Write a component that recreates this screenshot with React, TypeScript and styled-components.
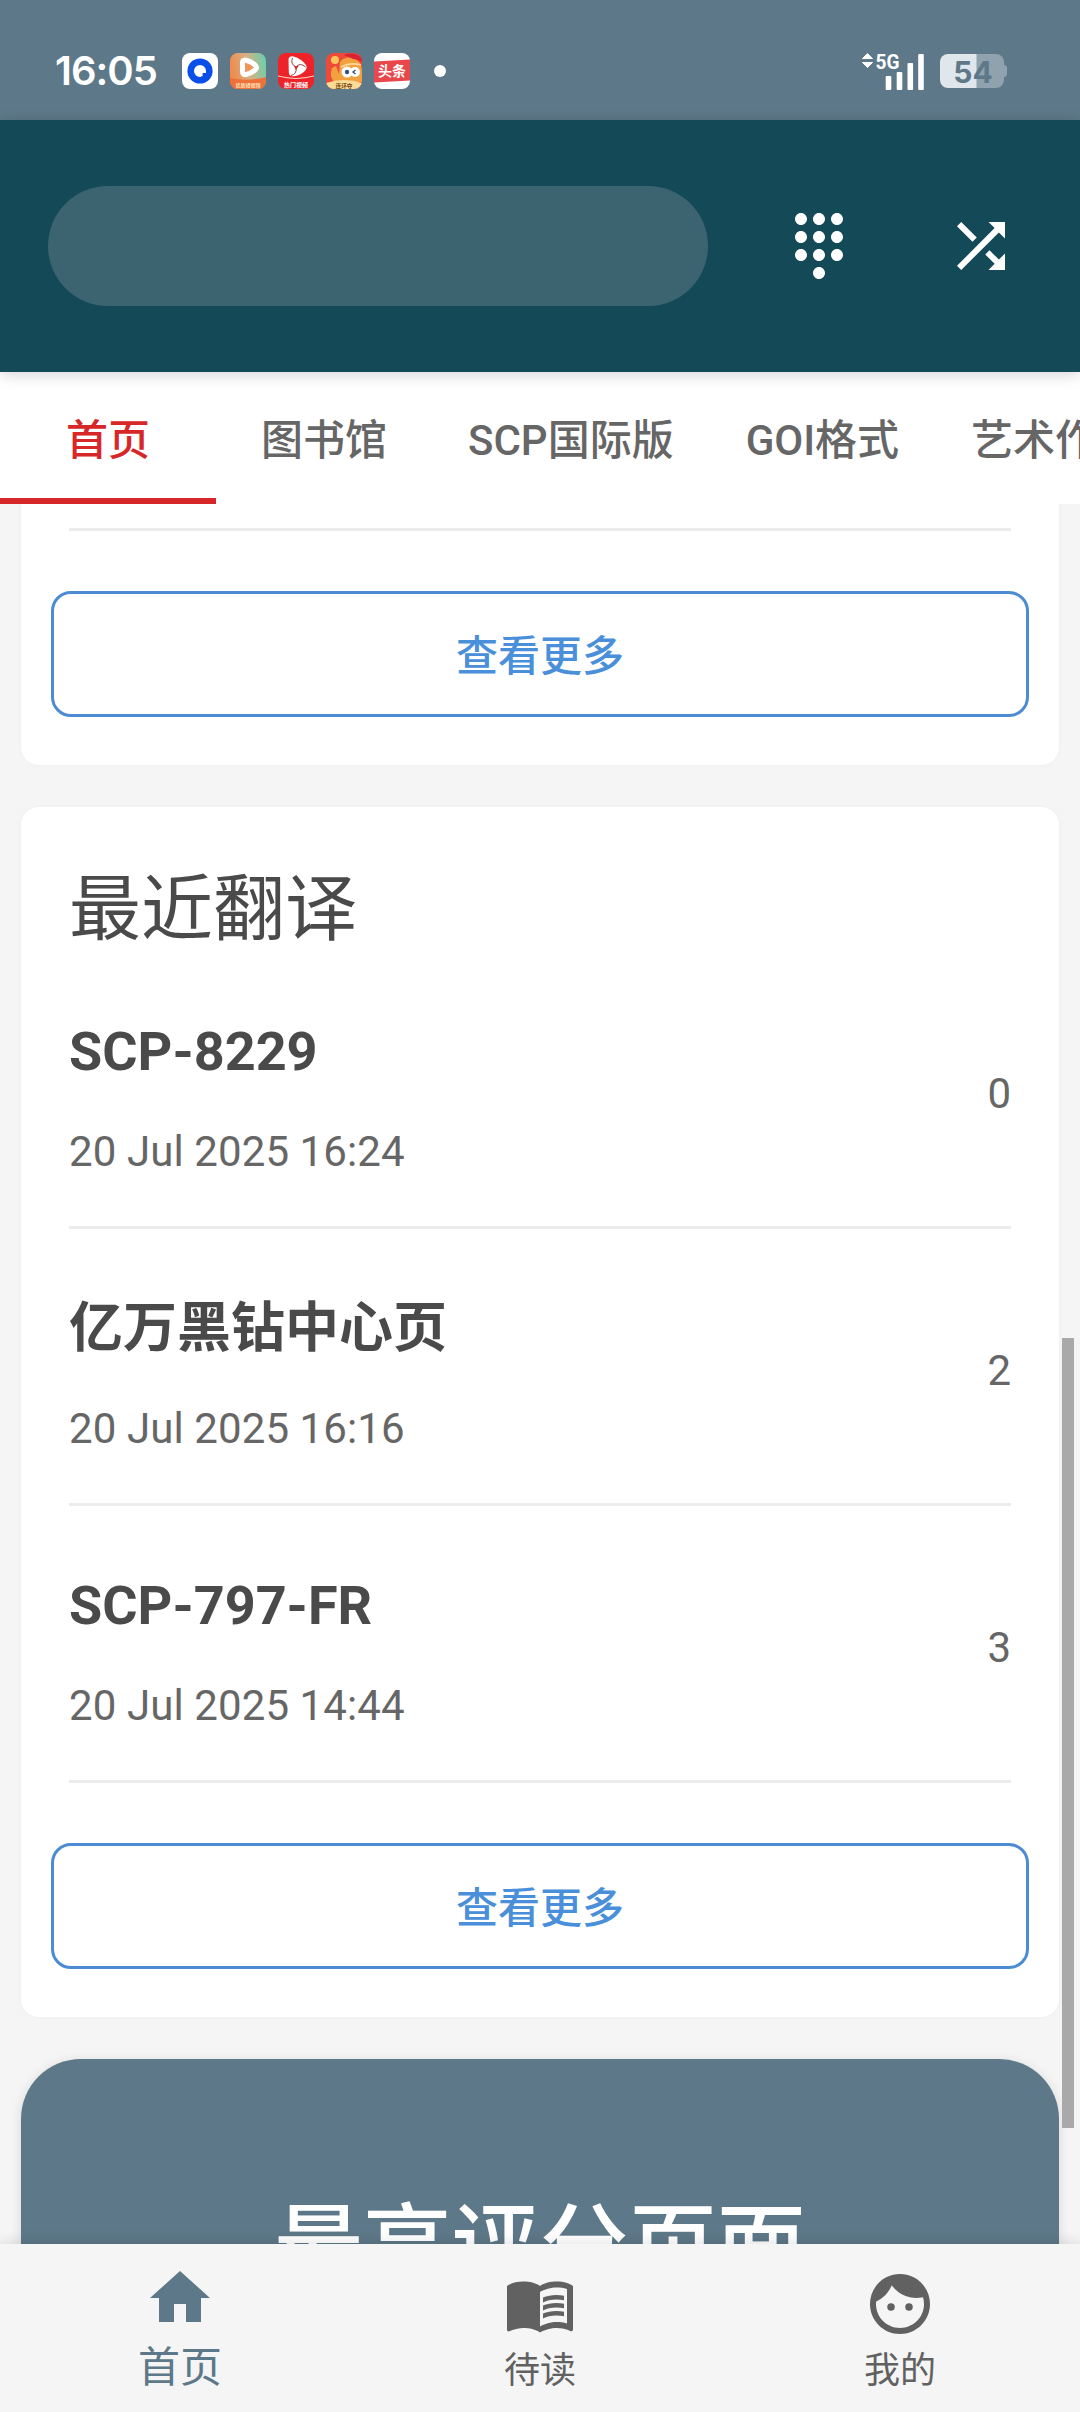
import React from "react";
import styled, { createGlobalStyle } from "styled-components";
import { MdDialpad, MdShuffle, MdHome, MdMenuBook, MdFace } from "react-icons/md";

const GlobalStyle = createGlobalStyle`
  * { box-sizing: border-box; }
  html, body { margin: 0; padding: 0; }
  body {
    font-family: Roboto, "Noto Sans CJK SC", sans-serif;
    background: #f5f5f5;
    overflow: hidden;
  }
  button { font: inherit; border: 0; background: none; padding: 0; margin: 0; }
  h2, h3, p { margin: 0; font-weight: 400; }
`;

const Screen = styled.div`
  position: relative;
  display: flex;
  flex-direction: column;
  width: 1080px;
  height: 2412px;
  overflow: hidden;
  background: #f5f5f5;
`;

const StatusBar = styled.div`
  flex: none;
  display: flex;
  align-items: flex-start;
  justify-content: space-between;
  height: 120px;
  padding: 51px 73px 0 55px;
  background: #5d7888;
`;

const StatusGroup = styled.div<{ $gap: number }>`
  display: flex;
  align-items: center;
  gap: ${(p) => p.$gap}px;
  height: 40px;
`;

const Clock = styled.span`
  width: 115px;
  font-family: Inter, sans-serif;
  font-size: 40px;
  font-weight: 600;
  line-height: 40px;
  letter-spacing: -1px;
  color: #fff;
`;

const AppBadge = styled.svg`
  width: 36px;
  height: 36px;
  display: block;
`;

const MoreDot = styled.span`
  width: 12px;
  height: 12px;
  margin-left: 12px;
  border-radius: 50%;
  background: #fff;
`;

const Signal = styled.svg`
  width: 64px;
  height: 38px;
  display: block;
  overflow: visible;
`;

const Battery = styled.svg`
  width: 67px;
  height: 35px;
  display: block;
  overflow: visible;
`;

const Header = styled.header`
  position: relative;
  z-index: 3;
  flex: none;
  display: flex;
  align-items: center;
  height: 252px;
  padding: 0 18px 0 48px;
  background: #144957;
  box-shadow: 0 3px 14px rgba(0, 0, 0, 0.16);
`;

const SearchField = styled.div`
  flex: none;
  width: 660px;
  height: 120px;
  margin-right: 30px;
  border-radius: 60px;
  background: #3c6370;
`;

const HeaderButton = styled.button`
  flex: none;
  display: flex;
  align-items: center;
  justify-content: center;
  width: 162px;
  height: 162px;
  color: #fff;
  svg { width: 72px; height: 72px; }
`;

const Tabs = styled.nav`
  position: relative;
  z-index: 2;
  flex: none;
  display: flex;
  height: 132px;
  background: #fff;
  overflow: hidden;
`;

const Tab = styled.button<{ $active?: boolean }>`
  flex: none;
  min-width: 216px;
  height: 132px;
  padding: 12px 36px 0;
  border-bottom: 6px solid ${(p) => (p.$active ? "#d82728" : "transparent")};
  font-size: 42px;
  font-weight: 500;
  line-height: 60px;
  white-space: nowrap;
  color: ${(p) => (p.$active ? "#d82728" : "#666")};
`;

const Content = styled.main`
  flex: 1;
  min-height: 0;
  display: flex;
  flex-direction: column;
  gap: 42px;
  padding: 0 21px;
  overflow: hidden;
`;

const Card = styled.section<{ $cut?: boolean }>`
  flex: none;
  padding: 0 30px 48px;
  border-radius: ${(p) => (p.$cut ? "0 0 18px 18px" : "18px")};
  background: #fff;
  box-shadow: 0 0 5px rgba(0, 0, 0, 0.03);
`;

const RowEnd = styled.div`
  height: 27px;
  margin: 0 18px;
  border-bottom: 3px solid #ececec;
`;

const CardTitle = styled.h2`
  height: 145px;
  padding: 51px 18px 0;
  font-size: 72px;
  line-height: 104px;
  color: #4a4a4a;
`;

const Row = styled.article`
  display: flex;
  align-items: center;
  justify-content: space-between;
  height: 277px;
  margin: 0 18px;
  border-bottom: 3px solid #ececec;
`;

const RowText = styled.div`
  display: flex;
  flex-direction: column;
  gap: 30px;
  padding-top: 15px;
`;

const RowTitle = styled.h3`
  font-size: 54px;
  font-weight: 700;
  line-height: 80px;
  color: #4a4a4a;
`;

const RowDate = styled.p`
  font-size: 42px;
  line-height: 60px;
  letter-spacing: 0.1px;
  color: #666;
`;

const RowScore = styled.span`
  padding-top: 9px;
  font-size: 42px;
  line-height: 60px;
  color: #666;
`;

const MoreButton = styled.button`
  display: block;
  width: 100%;
  height: 126px;
  margin-top: 60px;
  padding-top: 6px;
  border: 3px solid #4d8cd2;
  border-radius: 20px;
  font-size: 42px;
  font-weight: 500;
  line-height: 60px;
  color: #4a8fd9;
`;

const Hero = styled.section`
  flex: none;
  height: 420px;
  padding-top: 123px;
  border-radius: 60px;
  background: #5d7888;
  box-shadow: 0 2px 12px rgba(0, 0, 0, 0.12);
  font-size: 88.5px;
  font-weight: 500;
  line-height: 130px;
  text-align: center;
  color: #fff;
`;

const Scrollbar = styled.div`
  position: absolute;
  z-index: 1;
  left: 1062px;
  top: 1338px;
  width: 12px;
  height: 790px;
  background: #a9a9a9;
`;

const BottomNav = styled.nav`
  position: relative;
  z-index: 3;
  flex: none;
  display: flex;
  height: 168px;
  background: #f5f5f5;
  box-shadow: 0 0 14px rgba(0, 0, 0, 0.14);
`;

const NavItem = styled.button<{ $active?: boolean }>`
  flex: 1;
  display: flex;
  flex-direction: column;
  align-items: center;
  gap: ${(p) => (p.$active ? 4 : 1)}px;
  padding-top: ${(p) => (p.$active ? 18 : 24)}px;
  font-size: ${(p) => (p.$active ? 42 : 36)}px;
  line-height: 60px;
  color: ${(p) => (p.$active ? "#5d7888" : "#616161")};
  svg { flex: none; width: 72px; height: 72px; }
`;

const rows = [
  { title: "SCP-8229", date: "20 Jul 2025 16:24", score: 0 },
  { title: "亿万黑钻中心页", date: "20 Jul 2025 16:16", score: 2 },
  { title: "SCP-797-FR", date: "20 Jul 2025 14:44", score: 3 },
];

const tabs = ["首页", "图书馆", "SCP国际版", "GOI格式", "艺术作品"];

function BrowserBadge() {
  return (
    <AppBadge viewBox="0 0 36 36">
      <rect width="36" height="36" rx="8" fill="#fff" />
      <circle cx="18" cy="18" r="12.6" fill="#0a4fe8" />
      <path d="M18 12a6 6 0 0 1 6 6v2h-3.400v3.200H19V24h-1a6 6 0 0 1 0-12z" fill="#fff" />
    </AppBadge>
  );
}

function VideoBadge() {
  return (
    <AppBadge viewBox="0 0 36 36">
      <defs>
        <linearGradient id="video" x1="0" y1=".4" x2="1" y2=".2">
          <stop offset="0" stopColor="#f08a4c" />
          <stop offset=".5" stopColor="#d6b183" />
          <stop offset="1" stopColor="#69cfae" />
        </linearGradient>
        <clipPath id="videoClip"><rect width="36" height="36" rx="8" /></clipPath>
      </defs>
      <g clipPath="url(#videoClip)">
        <rect width="36" height="36" fill="url(#video)" />
        <path d="M0 25q18 4 36-1v12H0z" fill="#f0703a" />
        <path d="M12.500 9q.5-2.500 3.500-1.800 6 1.300 9.500 5.300 2 2.500-.5 4.500-4 3.500-9 4.500-3.500.5-3.500-3z" fill="#f0945a" stroke="#fff" strokeWidth="5" strokeLinejoin="round" />
        <text x="18" y="33.500" fontSize="5" fontWeight="700" textAnchor="middle" fill="#ffe2b8">优质短视频</text>
      </g>
    </AppBadge>
  );
}

function HotVideoBadge() {
  return (
    <AppBadge viewBox="0 0 36 36">
      <rect width="36" height="36" rx="8" fill="#ee2229" />
      <path d="M10.500 6q1-3.500 5-2.600 8 2 12.500 8.600 2 4-2.500 7.200-5 3.800-11 4-3.500 0-3.700-4z" fill="#fff" />
      <path d="M18 14q-6-3-3.500-9M18 14q4-5 9.500 0M18 15q1 6-5 7.500" stroke="#8e2a30" strokeWidth=".9" fill="none" />
      <path d="M16 13h4.500L18 17z" fill="#e0252c" />
      <path d="M0 23q18 5 36 0" stroke="#ffd8c8" strokeWidth="1.200" fill="none" />
      <text x="18" y="34" fontSize="6" fontWeight="700" textAnchor="middle" fill="#fff">热门视频</text>
    </AppBadge>
  );
}

function CartoonBadge() {
  return (
    <AppBadge viewBox="0 0 36 36">
      <defs><clipPath id="toonClip"><rect width="36" height="36" rx="8" /></clipPath></defs>
      <g clipPath="url(#toonClip)">
        <rect width="36" height="36" fill="#ee4a3a" />
        <path d="M14 9q4-6 14-4 7 3 8 12v12H8q-5-6-2-14l4-2 3 8z" fill="#f2a13f" />
        <path d="M18 2q9-4 18 3v4q-6-3-9-3-4-2-9-4z" fill="#d92232" />
        <path d="M15 14q9-5 20-2" stroke="#fbd9a0" strokeWidth="1.500" fill="none" />
        <circle cx="9" cy="7" r="4" fill="#fbc65b" />
        <circle cx="21" cy="19" r="5.500" fill="#fff" />
        <circle cx="29" cy="19" r="5" fill="#fff" />
        <circle cx="21" cy="19" r="2.200" fill="#39507a" />
        <path d="M29.500 17l-2.500 2 2.500 2" stroke="#39507a" strokeWidth="1.400" fill="none" />
        <path d="M0 30q18-6 36 0v6H0z" fill="#fbdc97" />
        <text x="18" y="34.500" fontSize="5.600" fontWeight="700" textAnchor="middle" fill="#7a4a10">连环夺</text>
      </g>
    </AppBadge>
  );
}

function NewsBadge() {
  return (
    <AppBadge viewBox="0 0 36 36">
      <rect width="36" height="36" rx="8" fill="#fff" />
      <path d="M0 8.500L36 6.500v21L0 29.500z" fill="#e9474b" />
      <text x="18" y="23.300" fontSize="14" fontWeight="700" textAnchor="middle" fill="#fff">头条</text>
    </AppBadge>
  );
}

function SignalIcon() {
  return (
    <Signal viewBox="0 0 64 38">
      <path d="M2.500 6.500L7.500 1.500l5 5zM2.500 10.500h10l-5 5z" fill="#fff" stroke="#fff" strokeWidth="1" strokeLinejoin="round" />
      <text x="15.500" y="16.500" fontSize="21" fontWeight="700" textLength="24" lengthAdjust="spacingAndGlyphs" fill="#fff">5G</text>
      <g fill="#fff">
        <rect x="25.700" y="24" width="5.600" height="14" rx="1" />
        <rect x="36.700" y="20" width="5.600" height="18" rx="1" />
        <rect x="47.500" y="11" width="5.600" height="27" rx="1" />
        <rect x="58.200" y="2" width="5.600" height="36" rx="1" />
      </g>
    </Signal>
  );
}

function BatteryIcon() {
  return (
    <Battery viewBox="0 0 67 35">
      <defs><clipPath id="cell"><rect width="64" height="34" rx="8" /></clipPath></defs>
      <g clipPath="url(#cell)">
        <rect width="37" height="34" fill="#dfe6ec" />
        <rect x="36.500" width="28" height="34" fill="#8fa2ad" />
      </g>
      <path d="M64 11q3 0 3 3v6q0 3-3 3z" fill="#8fa2ad" />
      <text x="33" y="28.500" fontFamily="Inter, sans-serif" fontSize="30" fontWeight="700" textAnchor="middle" fill="#5d7888">54</text>
    </Battery>
  );
}

export default function App() {
  return (
    <>
      <GlobalStyle />
      <Screen>
        <StatusBar>
          <StatusGroup $gap={12}>
            <Clock>16:05</Clock>
            <BrowserBadge />
            <VideoBadge />
            <HotVideoBadge />
            <CartoonBadge />
            <NewsBadge />
            <MoreDot />
          </StatusGroup>
          <StatusGroup $gap={16}>
            <SignalIcon />
            <BatteryIcon />
          </StatusGroup>
        </StatusBar>

        <Header>
          <SearchField />
          <HeaderButton aria-label="dialpad"><MdDialpad /></HeaderButton>
          <HeaderButton aria-label="shuffle"><MdShuffle /></HeaderButton>
        </Header>

        <Tabs>
          {tabs.map((name, i) => (
            <Tab key={name} $active={i === 0}>{name}</Tab>
          ))}
        </Tabs>

        <Content>
          <Card $cut>
            <RowEnd />
            <MoreButton>查看更多</MoreButton>
          </Card>
          <Card>
            <CardTitle>最近翻译</CardTitle>
            {rows.map((row) => (
              <Row key={row.title}>
                <RowText>
                  <RowTitle>{row.title}</RowTitle>
                  <RowDate>{row.date}</RowDate>
                </RowText>
                <RowScore>{row.score}</RowScore>
              </Row>
            ))}
            <MoreButton>查看更多</MoreButton>
          </Card>
          <Hero>最高评分页面</Hero>
        </Content>

        <BottomNav>
          <NavItem $active><MdHome />首页</NavItem>
          <NavItem><MdMenuBook />待读</NavItem>
          <NavItem><MdFace />我的</NavItem>
        </BottomNav>
        <Scrollbar />
      </Screen>
    </>
  );
}
